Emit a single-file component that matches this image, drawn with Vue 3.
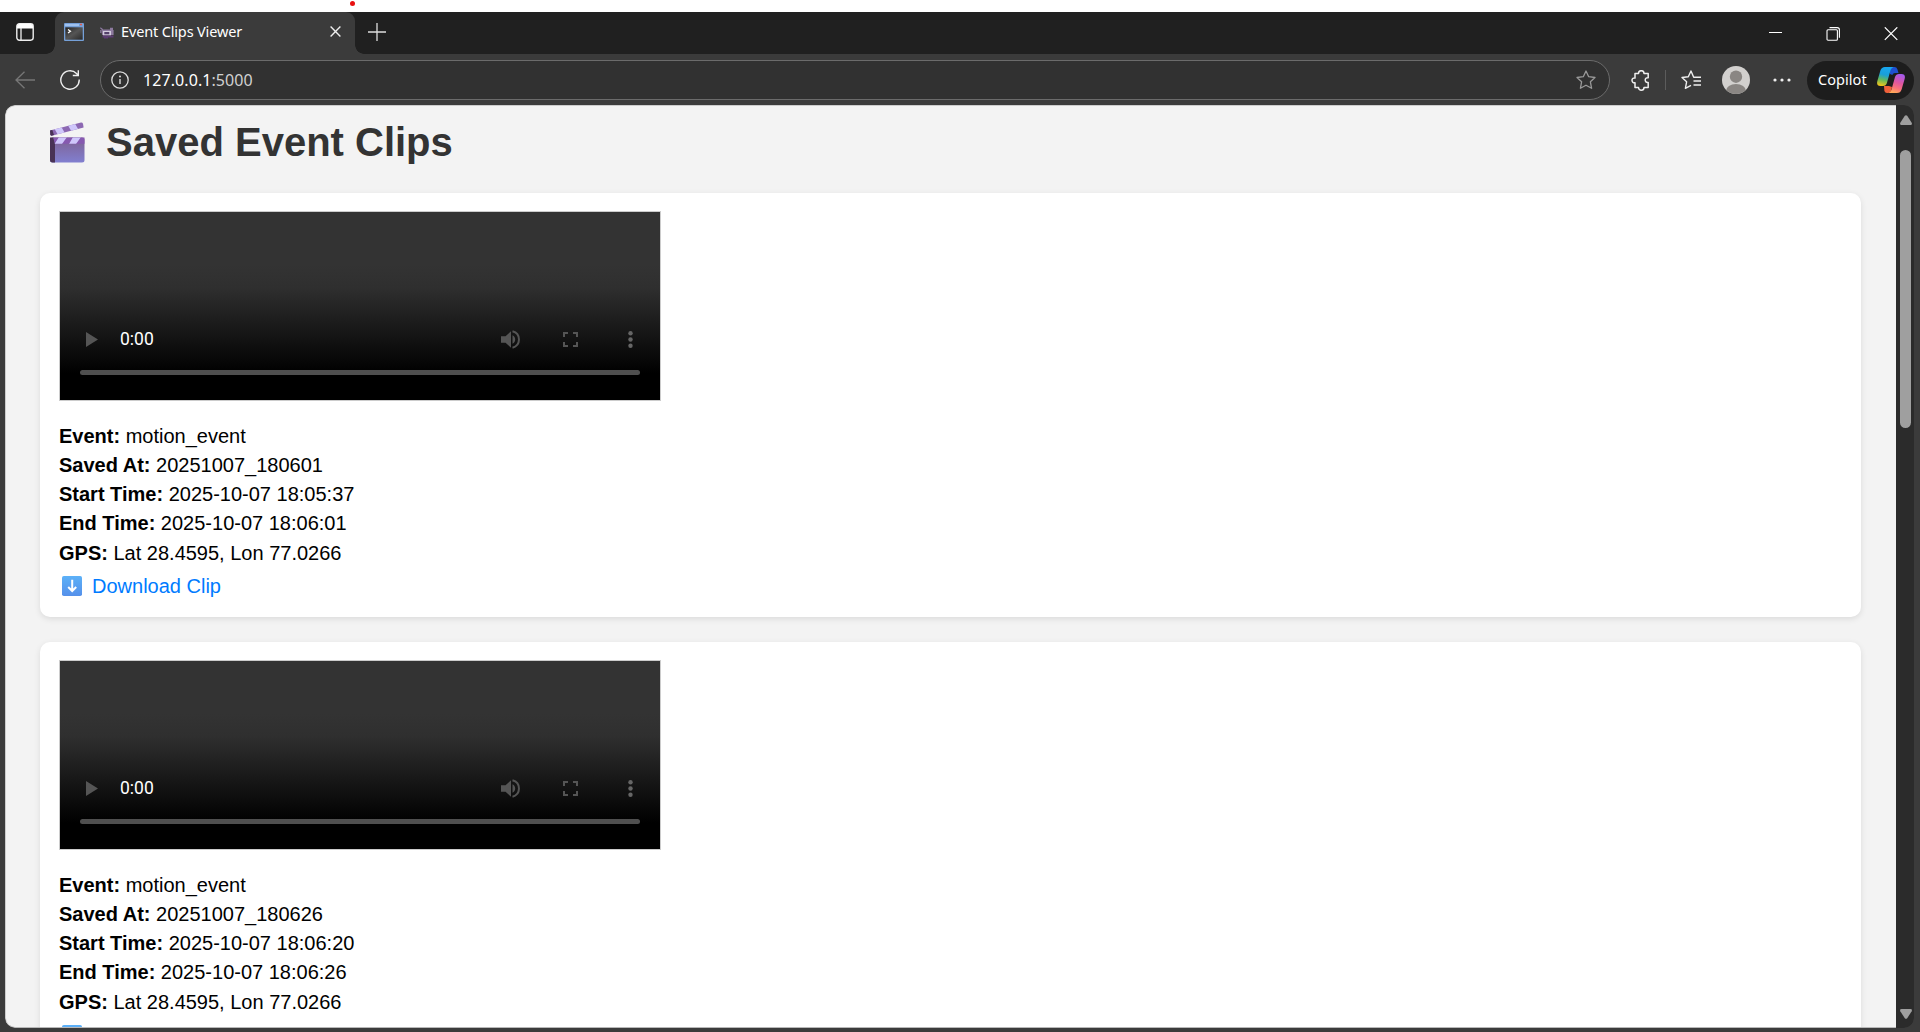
<script setup>
const clips = [
  { event: 'motion_event', saved: '20251007_180601', start: '2025-10-07 18:05:37', end: '2025-10-07 18:06:01', gps: 'Lat 28.4595, Lon 77.0266' },
  { event: 'motion_event', saved: '20251007_180626', start: '2025-10-07 18:06:20', end: '2025-10-07 18:06:26', gps: 'Lat 28.4595, Lon 77.0266' },
]
</script>

<template>
  <div class="screen">
    <div class="strip"><i class="dot"></i></div>
    <header class="tabs">
      <div class="side">
        <svg width="18" height="18" viewBox="0 0 18 18"><rect x=".8" y=".8" width="16.4" height="16.4" rx="2.6" fill="none" stroke="#eee" stroke-width="1.4" /><path d="M1 5.5V3.2Q1 1 3.2 1h11.6Q17 1 17 3.2v2.3z" fill="#fff" /><path d="M5 5v12" stroke="#eee" stroke-width="1.3" /></svg>
      </div>
      <div class="tab">
        <svg class="favicon" width="20" height="18" viewBox="0 0 20 18"><defs><linearGradient id="term" x2="1" y2="1"><stop stop-color="#222" /><stop offset=".5" stop-color="#555" /><stop offset="1" stop-color="#292929" /></linearGradient></defs><rect width="20" height="18" rx="1" fill="#75a0d8" /><rect x="1" y="1" width="14" height="2" fill="#9fc1ee" /><path d="M16 1.5h2" stroke="#e35c4d" stroke-width="1.5" /><rect x="1.3" y="4.3" width="17.4" height="12.4" fill="url(#term)" /><path d="M4 6.5l2.5 1.7L4 10" fill="none" stroke="#fff" stroke-width="1.2" /></svg>
        <svg class="cam" width="14" height="12" viewBox="0 0 14 12"><path d="M.3.8l2.5 2M.8 3v3" stroke="#8f7ba3" stroke-width="1.100" /><path d="M1.500 2.500h8.500V.8h3V3h.6v5H2z" fill="#8d7a9f" /><rect x="3" y="4" width="8" height="4.500" fill="#d3cadd" /><rect x="4.300" y="5" width="5" height="2.300" fill="#54406a" /><path d="M2.500 8.500h11V10.500H8V11.500H4V10.500H2.500z" fill="#5c3b72" /></svg>
        <span class="title">Event Clips Viewer</span>
        <svg class="shut" width="11" height="11" viewBox="0 0 11 11"><path d="M.6.6l9.8 9.8M10.4.6L.6 10.4" stroke="#eee" stroke-width="1.4" /></svg>
      </div>
      <svg class="plus" width="18" height="18" viewBox="0 0 18 18"><path d="M9 0v18M0 9h18" stroke="#ddd" stroke-width="1.3" /></svg>
      <div class="wins">
        <svg width="13" height="14" viewBox="0 0 13 14"><path d="M0 5.500h13" stroke="#fff" /></svg>
        <svg width="14" height="14" viewBox="0 0 14 14"><rect x="1" y="2.800" width="10.400" height="10.400" rx="1" fill="none" stroke="#fff" stroke-width="1.100" /><path d="M3.500.6h7.700q2.200 0 2.200 2.200v8" fill="none" stroke="#fff" stroke-width="1.100" /></svg>
        <svg width="14" height="14" viewBox="0 0 14 14"><path d="M.8.3l12.500 12.500M13.300.3L.8 12.800" stroke="#fff" stroke-width="1.200" /></svg>
      </div>
    </header>

    <nav class="bar">
      <svg class="back" width="20" height="18" viewBox="0 0 20 18"><path d="M9.5.7L1 9l8.500 8.300M1 9h19" fill="none" stroke="#777" stroke-width="1.3" /></svg>
      <svg class="reload" width="20" height="20" viewBox="0 0 20 20"><path d="M19.200 9.500A9.200 9.200 0 1 1 16.500 3.500L18 5M18.300.3V5.500h-5.500" fill="none" stroke="#eee" stroke-width="1.4" /></svg>
      <div class="url">
        <svg width="18" height="18" viewBox="0 0 18 18"><circle cx="9" cy="9" r="8.200" fill="none" stroke="#ddd" stroke-width="1.300" /><path d="M9 8v5" stroke="#ddd" stroke-width="1.400" /><circle cx="9" cy="5.500" r="1" fill="#ddd" /></svg>
        <span class="addr">127.0.0.1<span>:5000</span></span>
        <svg class="star" width="20" height="20" viewBox="0 0 20 20"><path d="M10 1l2.700 5.700 6.300.8-4.600 4.300 1.200 6.500L10 15.200l-5.600 3.100 1.200-6.500L1 7.500l6.300-.8z" fill="none" stroke="#999" stroke-width="1.300" stroke-linejoin="round" /></svg>
      </div>
      <svg class="puzzle" width="20" height="21" viewBox="0 0 20 21"><path d="M4 3.500h3.500C7.500-.2 13-.2 13 3.500h4.200v4.300c-4-.8-4 5.400 0 4.600v5h-4.200c0 3.700-5.500 3.700-5.500 0H4v-4.600C0 13.400 0 7.200 4 8z" fill="none" stroke="#eee" stroke-width="1.500" stroke-linejoin="round" /></svg>
      <i class="sep"></i>
      <svg class="favs" width="21" height="20" viewBox="0 0 21 20"><path d="M20 7.200h-7.300L10 1 7.300 6.700 1 7.500l4.600 4.300-1.200 6.500L10 15.300M12.500 11H20M12.500 15H20" fill="none" stroke="#eee" stroke-width="1.400" stroke-linejoin="round" /></svg>
      <svg class="avatar" width="28" height="28" viewBox="0 0 28 28"><defs><clipPath id="face"><circle cx="14" cy="14" r="14" /></clipPath></defs><g clip-path="url(#face)"><rect width="28" height="28" fill="#d2d0ce" /><circle cx="14" cy="10.700" r="6.200" fill="#8a8683" /><ellipse cx="14" cy="25" rx="10" ry="7" fill="#8a8683" /></g></svg>
      <svg class="more" width="18" height="4" viewBox="0 0 18 4"><g fill="#eee"><circle cx="2" cy="2" r="1.600" /><circle cx="9" cy="2" r="1.600" /><circle cx="16" cy="2" r="1.600" /></g></svg>
      <div class="copilot"><span>Copilot</span>
        <svg width="28" height="26" viewBox="0 0 28 26">
          <defs>
            <linearGradient id="cpA" x1=".5" y1="0" x2=".3" y2="1"><stop stop-color="#18a7ef" /><stop offset=".4" stop-color="#199fd8" /><stop offset=".68" stop-color="#63b85c" /><stop offset="1" stop-color="#f5c518" /></linearGradient>
            <linearGradient id="cpB" x1=".7" y1="0" x2=".4" y2="1"><stop stop-color="#a45aee" /><stop offset=".45" stop-color="#e0569f" /><stop offset=".75" stop-color="#fa7279" /><stop offset="1" stop-color="#ffa85a" /></linearGradient>
          </defs>
          <path d="M13 0h4.500q2.200 0 2.900 2.300L21.500 6H18q-2 0-2.700 2L13 7z" fill="#1f50d0" />
          <path d="M7 19h5l3 1-1 4q-.5 2-3 2H10q-2 0-2.600-2z" fill="#f0603a" />
          <path d="M8 0h8.500Q14.300.8 13.600 3L9.900 16Q9 19 6 19H3.500Q-.8 19 .3 14.200L3.400 3.500Q4.500 0 8 0z" fill="url(#cpA)" />
          <path d="M20 26h-8.500q2.200-.8 2.900-3L18 10q1-3 4-3h2.500q4.300 0 3.200 4.800l-3.100 10.700Q23.500 26 20 26z" fill="url(#cpB)" />
        </svg>
      </div>
    </nav>

    <div class="view">
      <main class="page">
        <h1>
          <svg width="36" height="41" viewBox="0 0 36 41"><defs><linearGradient id="slate" x2="0" y2="1"><stop stop-color="#7e6090" /><stop offset="1" stop-color="#817fd0" /></linearGradient><clipPath id="armTop"><path d="M1 8.500L32 .5q1.500-.2 2 1.300l.6 3.700L2.800 13.800q-1.200 0-1.500-1.300z" /></clipPath><clipPath id="armLow"><path d="M1 15.500h34.500v6.200H1z" /></clipPath></defs><rect x="1" y="15.500" width="34.500" height="25" rx="2.500" fill="url(#slate)" /><path d="M1 15.500h3.500l1.500 6v19H3.500Q1 40.500 1 38z" fill="#493255" /><g clip-path="url(#armLow)"><path d="M4 15h32v7H6z" fill="#8659b0" /><path d="M10 15h8l-5 7H5.500zM24 15h8l-5 7h-7z" fill="#cfc7fb" /></g><g clip-path="url(#armTop)"><path d="M0 0h36v14H0z" fill="#8c68b2" /><path d="M5 6l7-1.800 4 7-7 1.800zM18.500 2.500l7-1.800 4 7-7 1.800z" fill="#cfc7fb" /><path d="M0 8l3-1 2 6-4 2z" fill="#493255" /></g></svg>
          <span>Saved Event Clips</span>
        </h1>
        <section v-for="c in clips" :key="c.saved" class="card">
          <div class="video">
            <div class="controls">
              <svg class="play" width="12" height="15" viewBox="0 0 12 15"><path d="M0 0l12 7.500L0 15z" fill="#555" /></svg>
              <span class="time">0:00</span>
              <svg class="vol" width="20" height="19" viewBox="0 0 20 19"><path d="M0 6.300v6.400h4.500l5.500 5V1.300l-5.500 5zM11.500 5.200v8.600c3.600-1.600 3.600-7 0-8.600z" fill="#555" /><path d="M11.500 1.300c8.600 2.300 8.600 14.100 0 16.400" fill="none" stroke="#555" stroke-width="2" /></svg>
              <svg class="full" width="15" height="15" viewBox="0 0 15 15"><path d="M1 5V1h4M10 1h4v4M14 10v4h-4M5 14H1v-4" fill="none" stroke="#555" stroke-width="2" /></svg>
              <svg class="dots" width="5" height="17" viewBox="0 0 5 17"><g fill="#666"><circle cx="2.500" cy="2.300" r="2.200" /><circle cx="2.500" cy="8.500" r="2.200" /><circle cx="2.500" cy="14.700" r="2.200" /></g></svg>
            </div>
            <div class="track"></div>
          </div>
          <div class="meta">
            <p><b>Event:</b> {{ c.event }}</p>
            <p><b>Saved At:</b> {{ c.saved }}</p>
            <p><b>Start Time:</b> {{ c.start }}</p>
            <p><b>End Time:</b> {{ c.end }}</p>
            <p class="gps"><b>GPS:</b> {{ c.gps }}</p>
            <a><svg width="20" height="20" viewBox="0 0 20 20"><defs><linearGradient id="dl" x2="0" y2="1"><stop stop-color="#5cb1f8" /><stop offset="1" stop-color="#5590ea" /></linearGradient></defs><rect width="20" height="20" rx="1.800" fill="url(#dl)" /><path d="M10.200 3.800v10M6.200 11l4 4 4-4" fill="none" stroke="#fff" stroke-width="2" /></svg><span>Download Clip</span></a>
          </div>
        </section>
      </main>
      <aside class="scroll">
        <svg width="12" height="10" viewBox="0 0 12 10"><path d="M4.800.8q1.200-1.300 2.400 0l4.500 7Q12.500 10 10.500 10h-9Q-.5 10 .3 7.800z" fill="#9f9f9f" /></svg>
        <i class="thumb"></i>
        <svg class="down" width="12" height="10" viewBox="0 0 12 10"><path d="M4.800 9.200q1.200 1.300 2.400 0l4.500-7Q12.500 0 10.500 0h-9Q-.5 0 .3 2.200z" fill="#9f9f9f" /></svg>
      </aside>
    </div>
  </div>
</template>

<style>
body { margin: 0; overflow: hidden; }
</style>

<style scoped>
* { box-sizing: border-box; }
svg { display: block; flex: none; }
.screen { width: 1920px; height: 1032px; display: flex; flex-direction: column; background: #3b3b3b; overflow: hidden; font-family: "Liberation Sans", Arial, sans-serif; }
.strip { height: 12px; background: #fff; flex: none; }
.dot { display: block; width: 5px; height: 5px; border-radius: 50%; background: #e81010; margin-left: 350px; transform: translateY(1px); }
.tabs { height: 42px; flex: none; background: #202020; display: flex; font-family: "Noto Sans", "Open Sans", sans-serif; }
.side { width: 55px; background: #202020; padding: 11px 0 0 16px; }
.tab { width: 300px; height: 42px; background: #3b3b3b; border-radius: 9px 9px 0 0; display: flex; align-items: center; padding: 0 14px 3px 9px; position: relative; }
.tab::before, .tab::after { content: ""; position: absolute; bottom: 0; width: 9px; height: 9px; }
.tab::before { left: -9px; background: radial-gradient(circle at 0 0, transparent 8.500px, #3b3b3b 9px); }
.tab::after { right: -9px; background: radial-gradient(circle at 100% 0, transparent 8.500px, #3b3b3b 9px); }
.cam { margin: 2px 0 0 16px; }
.title { color: #fff; font-size: 14.500px; line-height: 20px; margin: 0 0 2px 7px; white-space: nowrap; letter-spacing: -0.150px; }
.shut { margin-left: auto; }
.plus { margin: 11px 0 0 13px; }
.wins { margin-left: auto; display: flex; gap: 44px; padding: 15px 22px 0 0; }
.bar { height: 51px; flex: none; display: flex; align-items: center; padding: 1px 6px 0 15px; font-family: "Noto Sans", "Open Sans", sans-serif; }
.reload { margin-left: 25px; }
.url { margin-left: 20px; width: 1510px; height: 40px; border: 1px solid #6b6b6b; border-radius: 20px; background: #313131; display: flex; align-items: center; padding: 0 13px 0 10px; }
.addr { color: #fff; font-size: 16px; line-height: 22px; margin: 0 0 1px 14px; letter-spacing: 0.080px; }
.addr span { color: #d0d0d0; }
.star { margin-left: auto; }
.puzzle { margin-left: 21px; }
.sep { width: 1px; height: 20px; background: #5c5c5c; margin-left: 14px; }
.favs { margin-left: 15px; }
.avatar { margin-left: 20px; }
.more { margin-left: 23px; }
.copilot { margin-left: auto; width: 107px; height: 39px; border-radius: 20px; background: #1d1d1d; color: #fff; display: flex; align-items: center; justify-content: space-between; padding: 0 9px 0 11px; font-size: 14.500px; }
.copilot span { margin-bottom: 2px; letter-spacing: 0.050px; }
.view { height: 923px; margin-left: 5px; display: flex; flex: none; width: 1909px; border-radius: 10px; overflow: hidden; }
.page { width: 1891px; flex: none; background: #f3f3f3; border-top: 1px solid #ccc; border-left: 1px solid #ccc; border-bottom: 1px solid #b8b8b8; border-radius: 10px 0 0 10px; padding: 16px 35px 0 34px; overflow: hidden; }
h1 { margin: 0; height: 71px; display: flex; color: #333; font-size: 40px; line-height: 41px; }
h1 svg { margin-left: 9px; }
h1 span { margin-left: 21px; white-space: nowrap; }
.card { height: 424px; margin-bottom: 25px; background: #fff; border-radius: 10px; box-shadow: 0 2px 6px rgba(0, 0, 0, .1); padding: 18px 19px; }
.video { width: 602px; height: 190px; border: 1px solid #ccc; background: linear-gradient(#333 0, #333 28%, #2f2f2f 40%, #000 86%); }
.controls { height: 148px; display: flex; align-items: flex-end; padding: 0 26px 11px; }
.play { margin-bottom: 2px; }
.time { color: #fff; font: 17.500px/19px Roboto, sans-serif; margin-left: 22px; }
.vol { margin-left: auto; }
.full { margin: 0 0 2px 42px; }
.dots { margin: 0 1px 1px 50px; }
.track { height: 5px; margin: 10px 20px 0; border-radius: 3px; background: #4f4f4f; }
.meta { margin-top: 21px; font-size: 20px; color: #000; }
p { margin: 0; height: 29px; line-height: 29px; white-space: nowrap; }
.gps { height: 31px; line-height: 31px; }
a { display: flex; align-items: center; height: 34px; padding-left: 3px; color: #007bff; text-decoration: none; }
a span { margin-left: 10px; }
.scroll { width: 18px; flex: none; background: #2b2b2b; border-radius: 0 10px 10px 0; display: flex; flex-direction: column; align-items: center; padding: 10px 0 9px 1px; }
.thumb { width: 11px; height: 278px; border-radius: 6px; background: #9f9f9f; margin-top: 25px; }
.down { margin-top: auto; }
</style>
